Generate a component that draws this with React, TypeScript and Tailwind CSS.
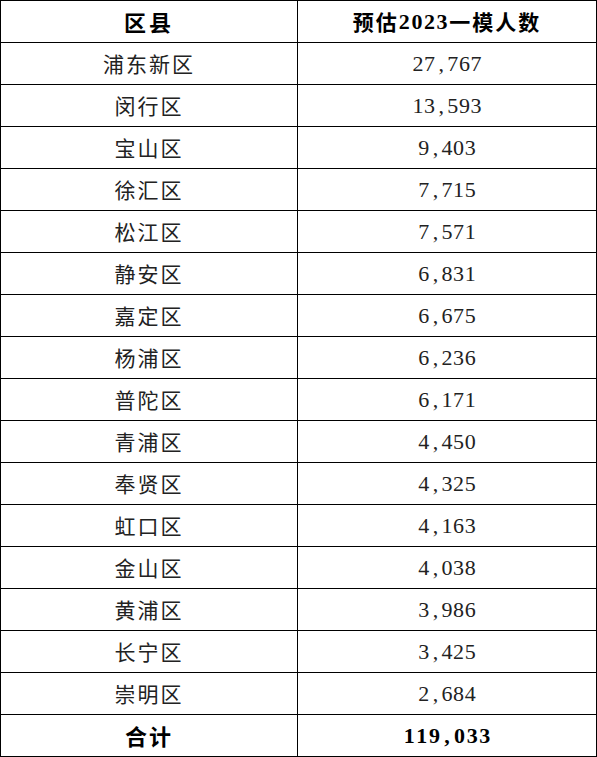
const rows: [string, string][] = [
  ["浦东新区", "27,767"],
  ["闵行区", "13,593"],
  ["宝山区", "9,403"],
  ["徐汇区", "7,715"],
  ["松江区", "7,571"],
  ["静安区", "6,831"],
  ["嘉定区", "6,675"],
  ["杨浦区", "6,236"],
  ["普陀区", "6,171"],
  ["青浦区", "4,450"],
  ["奉贤区", "4,325"],
  ["虹口区", "4,163"],
  ["金山区", "4,038"],
  ["黄浦区", "3,986"],
  ["长宁区", "3,425"],
  ["崇明区", "2,684"],
]

const cjk = "font-['Noto_Sans_CJK_SC',sans-serif]"
const serif = "font-['Liberation_Serif','Noto_Sans_CJK_SC',serif]"

// SimSun-style half-width digits: every char gets the same box
function Num({ value, bold }: { value: string; bold?: boolean }) {
  return (
    <span className={`${serif} ${bold ? "font-bold text-[22px]" : "text-[22px]"} inline-flex`}>
      {value.split("").map((ch, i) => (
        <span key={i} className={`inline-block text-center ${bold ? "w-[12.6px]" : "w-[11.6px]"}`}>
          {ch}
        </span>
      ))}
    </span>
  )
}

function Row({ left, right }: { left: React.ReactNode; right: React.ReactNode }) {
  return (
    <div className="flex h-[42px] border-b border-black">
      <div className="w-[297px] border-r border-black flex items-center justify-center">{left}</div>
      <div className="flex-1 flex items-center justify-center">{right}</div>
    </div>
  )
}

export default function App() {
  return (
    <div className="w-[597px] h-[757px] bg-white">
      <div className="border-t border-l border-r border-black text-black">
        <Row
          left={<span className={`${cjk} font-bold text-[22px] tracking-[3px]`}>区县</span>}
          right={
            <span className={`${cjk} font-bold text-[21px] tracking-[2px] flex items-center`}>
              预估<Num value="2023" bold />一模人数
            </span>
          }
        />
        {rows.map(([name, n]) => (
          <Row
            key={name}
            left={<span className={`${cjk} text-[21px] tracking-[2px] text-[#222]`}>{name}</span>}
            right={<span className="text-[#222]"><Num value={n} /></span>}
          />
        ))}
        <Row
          left={<span className={`${cjk} font-bold text-[22px] tracking-[2px]`}>合计</span>}
          right={<Num value="119,033" bold />}
        />
      </div>
    </div>
  )
}
